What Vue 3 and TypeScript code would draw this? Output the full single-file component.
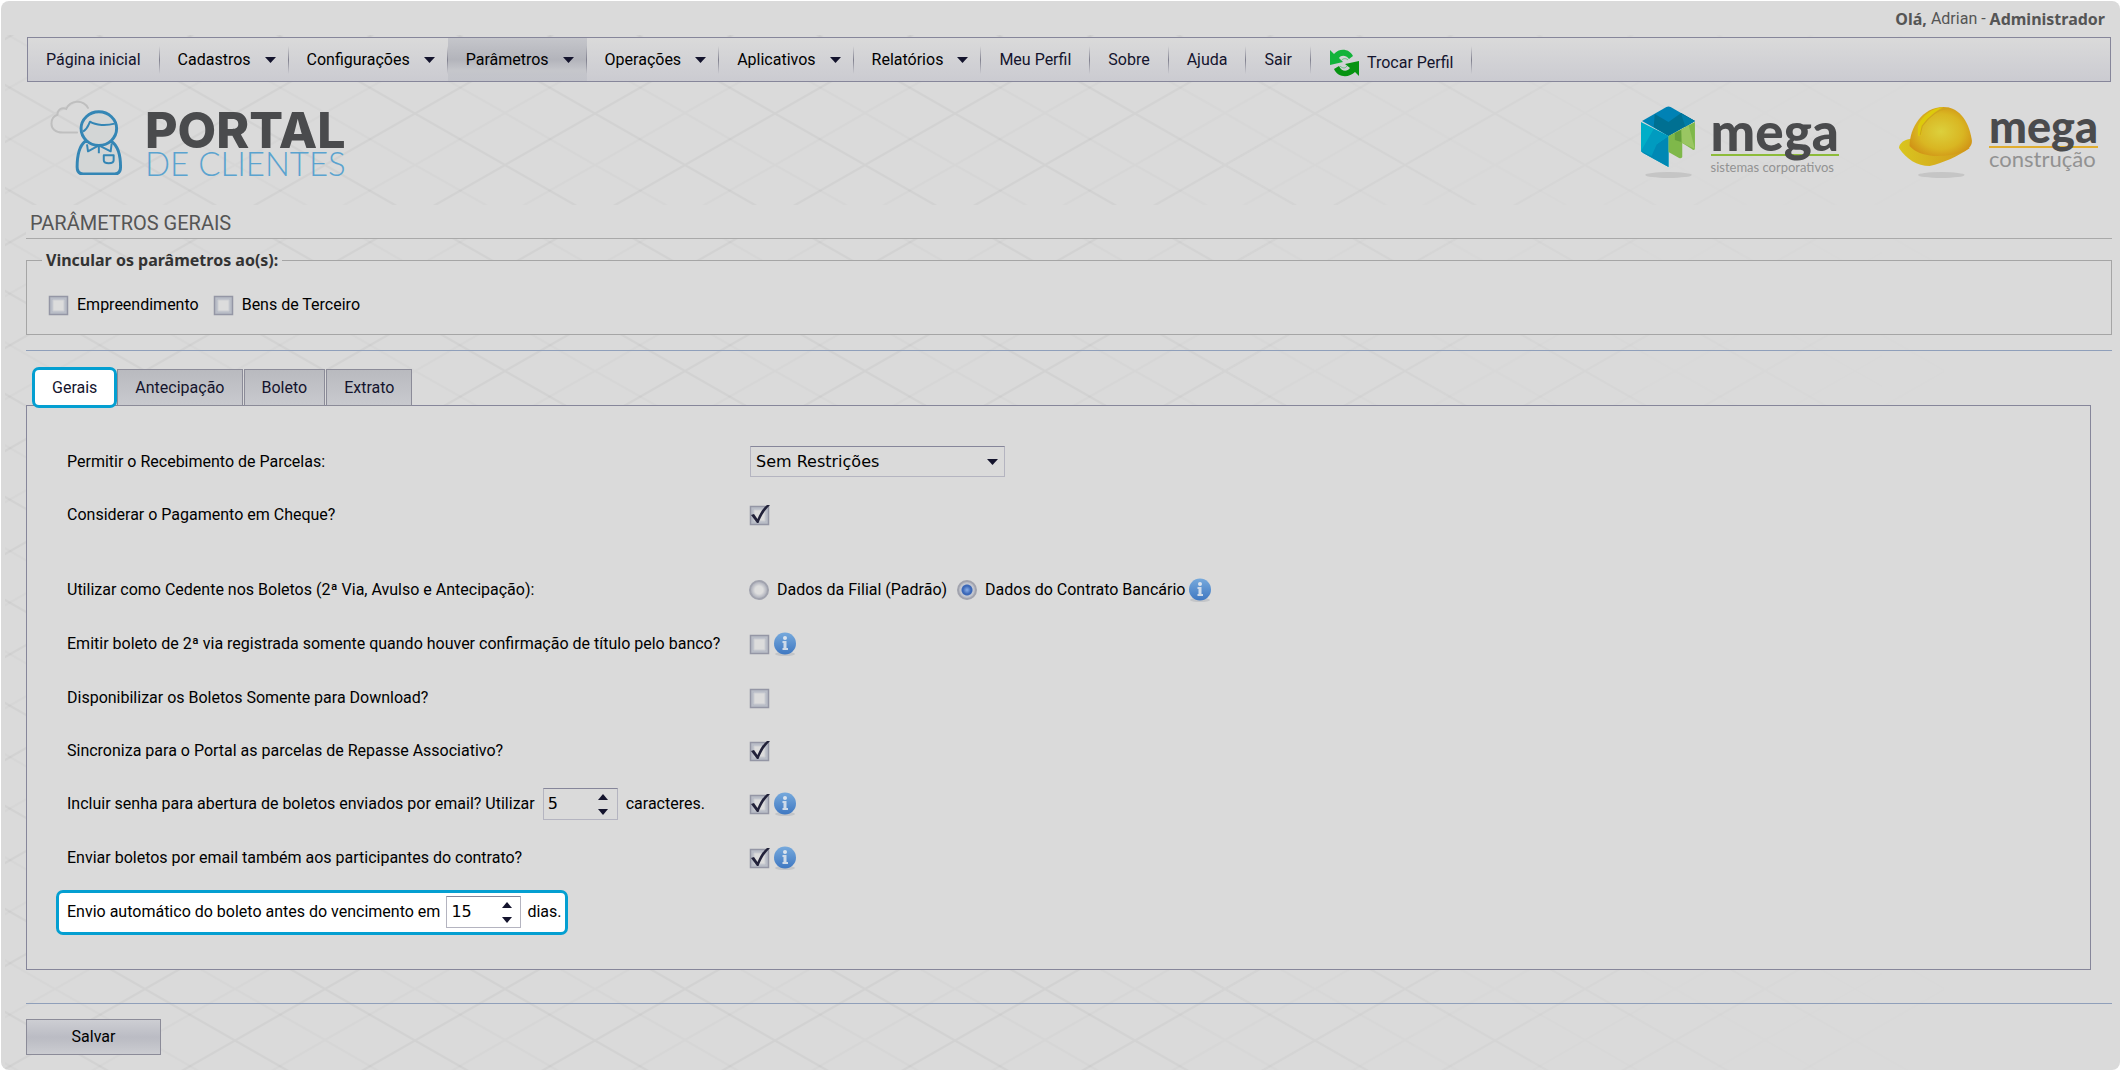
<script setup lang="ts">
import { ref } from 'vue'

interface MenuItem {
  label: string
  menu?: boolean
  active?: boolean
  swap?: boolean
}

interface Option {
  id: string
  label: string
  checked: boolean
  info?: boolean
  spin?: boolean
}

const menuItems: MenuItem[] = [
  { label: 'Página inicial' },
  { label: 'Cadastros', menu: true },
  { label: 'Configurações', menu: true },
  { label: 'Parâmetros', menu: true, active: true },
  { label: 'Operações', menu: true },
  { label: 'Aplicativos', menu: true },
  { label: 'Relatórios', menu: true },
  { label: 'Meu Perfil' },
  { label: 'Sobre' },
  { label: 'Ajuda' },
  { label: 'Sair' },
  { label: 'Trocar Perfil', swap: true },
]

const tabs = ['Gerais', 'Antecipação', 'Boleto', 'Extrato']
const currentTab = ref('Gerais')

const cheque = ref(true)
const cedente = ref('contrato')
const recebimento = ref('Sem Restrições')
const passwordLength = ref(5)
const daysBefore = ref(15)

const options = ref<Option[]>([
  { id: 'segunda-via', label: 'Emitir boleto de 2ª via registrada somente quando houver confirmação de título pelo banco?', checked: false, info: true },
  { id: 'download', label: 'Disponibilizar os Boletos Somente para Download?', checked: false },
  { id: 'repasse', label: 'Sincroniza para o Portal as parcelas de Repasse Associativo?', checked: true },
  { id: 'senha', label: 'Incluir senha para abertura de boletos enviados por email? Utilizar', checked: true, info: true, spin: true },
  { id: 'participantes', label: 'Enviar boletos por email também aos participantes do contrato?', checked: true, info: true },
])
</script>

<template>
  <div class="page">
    <svg class="lattice" aria-hidden="true">
      <defs>
        <pattern id="diamonds" x="140" y="27" width="180" height="103" patternUnits="userSpaceOnUse">
          <path d="M0 0L180 103M180 0L0 103" fill="none" stroke="#000" stroke-opacity=".034" stroke-width="2" />
          <path d="M90 0L180 51L90 103L0 51Z" fill="none" stroke="#000" stroke-opacity=".014" stroke-width="2" />
        </pattern>
      </defs>
      <rect width="100%" height="100%" fill="url(#diamonds)" />
    </svg>

    <header class="user"><b>Olá,</b>&nbsp;Adrian -&nbsp;<b>Administrador</b></header>

    <nav class="menubar">
      <template v-for="item in menuItems" :key="item.label">
        <button v-if="item.menu" type="button" class="item drop" :class="{ active: item.active }">
          {{ item.label }}
          <svg width="11" height="6" viewBox="0 0 11 6"><path d="M0 0H11L5.5 6Z" fill="#14142d" /></svg>
        </button>
        <a v-else href="#" class="item" :class="{ swap: item.swap }">
          <svg v-if="item.swap" width="30" height="28" viewBox="0 0 30 28">
            <path d="M1 1L5 5C10 -1 20 -1 24 7L20 10C17 6 12 6 10 9L14 13L1 16Z" fill="#12b33a" />
            <path d="M30 27L26 23C20 29 9 29 5 20L10 17C13 23 18 23 21 19L16 15L30 12Z" fill="#079312" />
            <path d="M12 12C14 9 17 9 19 11M18 17C16 20 13 19 11 17" fill="none" stroke="#5fc27c" stroke-width="1" />
          </svg>
          <span>{{ item.label }}</span>
        </a>
      </template>
    </nav>

    <div class="brands">
      <div class="brand portal">
        <svg width="74" height="77" viewBox="0 0 74 78">
          <path d="M27 35H12C5 35 1 31 1 26C1 21 4 18 7 17C7 12 11 9 16 11C20 2 33 1 38 10" fill="none" stroke="#bfbfbf" stroke-width="2" stroke-linecap="round" />
          <path d="M35 44C29 49 27 59 27 70C27 75 29 77 33 77H65C69 77 71 75 71 70C71 59 69 49 62 44Z" fill="#d3d6d6" stroke="#3486b5" stroke-width="3" />
          <ellipse cx="49" cy="31" rx="18" ry="17" fill="#d3d6d6" stroke="#3486b5" stroke-width="3" />
          <path d="M33 34C38 31 38 28 40 24C46 28 57 28 65 26M37 47L38 54L49 48L61 54L62 46M49 48V56M54 58H64V63C64 67 54 67 54 63Z" fill="none" stroke="#3486b5" stroke-width="2" stroke-linejoin="round" />
        </svg>
        <div class="wordmark">
          <strong>PORTAL</strong>
          <span>DE CLIENTES</span>
        </div>
      </div>

      <div class="brand sistemas">
        <svg width="55" height="74" viewBox="0 0 52 74" preserveAspectRatio="none">
          <ellipse cx="26" cy="69" rx="22" ry="3" fill="#c5c5c5" />
          <path d="M1 15L24 1Q26 0 28 1L51 15L26 30Z" fill="#0082b5" />
          <path d="M13 8L26 16L38 7L51 15L26 30L12 21Z" fill="#007092" />
          <path d="M38 8L51 15L42 21Z" fill="#007da8" />
          <path d="M0 16L26 30V61L2 47Q0 46 0 44Z" fill="#00aec8" />
          <path d="M0 45L15 38L26 30V61L2 47Z" fill="#0088b4" />
          <path d="M12 23L26 30L15 38L10 50L0 45Z" fill="#009bc0" />
          <path d="M26 30L51 16V43Q50 45 48 43L39 37V51Q38 53 36 52L26 46Z" fill="#7fb84a" />
          <path d="M38 24L45 19L51 43L39 37Z" fill="#9ac662" />
          <path d="M32 27L38 24V36L32 34Z" fill="#659f3c" />
        </svg>
        <div class="wordmark">
          <strong>mega</strong>
          <span>sistemas corporativos</span>
        </div>
      </div>

      <div class="brand construcao">
        <svg width="74" height="74" viewBox="0 0 70 74" preserveAspectRatio="none">
          <defs>
            <radialGradient id="shell" cx=".5" cy=".5" r=".6">
              <stop offset="0" stop-color="#dcd03c" />
              <stop offset=".6" stop-color="#d9b622" />
              <stop offset="1" stop-color="#cf8d14" />
            </radialGradient>
            <linearGradient id="brim" x1="0" x2="1">
              <stop offset="0" stop-color="#d9c51f" />
              <stop offset="1" stop-color="#d29b1c" />
            </linearGradient>
          </defs>
          <ellipse cx="40" cy="69" rx="22" ry="3" fill="#c5c5c5" />
          <path d="M10 33C4 34 0 38 0 42C7 53 17 60 29 60C42 57 56 50 67 42Z" fill="url(#brim)" />
          <path d="M10 40C10 22 22 1 42 1C59 1 67 19 69 35C69 47 50 50 33 50C23 49 15 46 10 40Z" fill="url(#shell)" />
          <path d="M18 20C22 9 32 2 42 1C33 6 26 13 22 20L21 29L18 30Z" fill="#ddca0b" />
          <path d="M20 29L22 20C28 11 35 4 47 2" fill="none" stroke="#cda51c" stroke-width="1" />
        </svg>
        <div class="wordmark">
          <strong>mega</strong>
          <span>construção</span>
        </div>
      </div>
    </div>

    <h1>PARÂMETROS GERAIS</h1>

    <fieldset class="bind">
      <legend>Vincular os parâmetros ao(s):</legend>
      <label><input type="checkbox" />Empreendimento</label>
      <label><input type="checkbox" />Bens de Terceiro</label>
    </fieldset>

    <hr />

    <div class="tabs" role="tablist">
      <button
        v-for="tab in tabs"
        :key="tab"
        type="button"
        role="tab"
        :aria-selected="tab === currentTab"
        :class="{ current: tab === currentTab }"
        @click="currentTab = tab"
      >{{ tab }}</button>
    </div>

    <form class="panel" @submit.prevent>
      <div class="row">
        <label class="caption" for="recebimento">Permitir o Recebimento de Parcelas:</label>
        <select id="recebimento" v-model="recebimento">
          <option>Sem Restrições</option>
        </select>
      </div>
      <div class="row spaced">
        <label class="caption" for="cheque">Considerar o Pagamento em Cheque?</label>
        <input id="cheque" v-model="cheque" type="checkbox" />
      </div>
      <div class="row tall">
        <span id="cedente" class="caption">Utilizar como Cedente nos Boletos (2ª Via, Avulso e Antecipação):</span>
        <div class="radios" role="radiogroup" aria-labelledby="cedente">
          <label><input v-model="cedente" type="radio" value="filial" />Dados da Filial (Padrão)</label>
          <label><input v-model="cedente" type="radio" value="contrato" />Dados do Contrato Bancário</label>
          <i class="info" aria-hidden="true"></i>
        </div>
      </div>
      <div v-for="option in options" :key="option.id" class="row" :class="{ tall: option.info }">
        <div class="caption">
          <label :for="option.id">{{ option.label }}</label>
          <template v-if="option.spin">
            <div class="spin">
              <input v-model="passwordLength" type="number" aria-label="Quantidade de caracteres" />
              <button type="button" aria-label="Aumentar" @click="passwordLength++"></button>
              <button type="button" aria-label="Diminuir" class="down" @click="passwordLength--"></button>
            </div>
            <span>caracteres.</span>
          </template>
        </div>
        <input :id="option.id" v-model="option.checked" type="checkbox" />
        <i v-if="option.info" class="info" aria-hidden="true"></i>
      </div>
      <div class="row tall">
        <div class="spotlight">
          <label for="dias">Envio automático do boleto antes do vencimento em</label>
          <div class="spin">
            <input id="dias" v-model="daysBefore" type="number" />
            <button type="button" aria-label="Aumentar" @click="daysBefore++"></button>
            <button type="button" aria-label="Diminuir" class="down" @click="daysBefore--"></button>
          </div>
          <span>dias.</span>
        </div>
      </div>
    </form>

    <hr class="end" />
    <button type="button" class="save">Salvar</button>
  </div>
</template>

<style>
body {
  background: #fff;
}
</style>

<style scoped>
* {
  box-sizing: border-box;
}

.page {
  position: relative;
  z-index: 0;
  margin: 1px;
  padding: 0 8px 15px 25px;
  background: #dadada;
  border-radius: 8px;
  color: #000;
  font: 16px/20px Roboto, "Liberation Sans", sans-serif;
  overflow: hidden;
}

button,
input,
select {
  margin: 0;
  font: inherit;
  color: inherit;
}

.lattice {
  position: absolute;
  z-index: -1;
  inset: 34px 0 0 4px;
  width: 100%;
  height: 100%;
  mask-image: linear-gradient(to right, #000 50%, transparent 94%);
}

.user {
  display: flex;
  justify-content: flex-end;
  height: 36px;
  padding: 8px 7px 0 0;
  color: #555;
}

.user b,
.bind legend {
  font-family: "Noto Sans", sans-serif;
}

.menubar {
  display: flex;
  height: 45px;
  margin: 0 1px;
  border: 1px solid #86869a;
  background: linear-gradient(#dadada, #cbcbd1);
}

.item {
  position: relative;
  display: flex;
  align-items: center;
  padding: 0 19px 0 18px;
  border: 0;
  background: none;
  color: #14142d;
  text-decoration: none;
  white-space: nowrap;
}

.item::after {
  content: "";
  align-self: center;
  position: absolute;
  right: 0;
  width: 1px;
  height: 28px;
  background: linear-gradient(transparent, #81818f, transparent);
}

.drop {
  gap: 14px;
  padding-right: 13px;
  color: #000;
}

.active {
  background: linear-gradient(#c5c6cb, #b3b4bb 50%, #c5c6cb 75%, #c2c3ca);
}

.swap {
  gap: 8px;
  padding-top: 6px;
}

.swap::after {
  top: 8px;
}

.brands {
  display: flex;
  align-items: flex-start;
  height: 123px;
  padding: 16px 14px 0 24px;
}

.brand {
  display: flex;
}

.wordmark {
  display: flex;
  flex-direction: column;
  color: #4a4b4d;
}

.portal {
  gap: 21px;
  margin-right: auto;
}

.portal strong {
  height: 49px;
  padding-top: 8px;
  font: 800 50px/48px Inter, sans-serif;
}

.portal span {
  color: #5aa3cf;
  font: 300 33px/32px Lato, sans-serif;
}

.sistemas {
  gap: 15px;
  margin: 8px 60px 0 0;
}

.sistemas strong {
  height: 50px;
  border-bottom: 2px solid #8dbb3a;
  font: 900 53px/50px Lato, sans-serif;
}

.sistemas span,
.construcao span {
  color: #929292;
  font: 13px/22px Lato, sans-serif;
}

.construcao {
  gap: 16px;
  margin-top: 8px;
}

.construcao strong {
  height: 42px;
  border-bottom: 2px solid #e0ad2f;
  font: 900 45px/40px Lato, sans-serif;
}

.construcao span {
  font-size: 22px;
}

h1 {
  height: 34px;
  margin: 0;
  padding: 4px 4px 0;
  border-bottom: 1px solid #a9a9a9;
  background: #dadada;
  color: #555;
  font: 20px/28px Roboto, sans-serif;
}

.bind {
  display: flex;
  height: 85px;
  margin: 11px 0 0;
  padding: 24px 21px 0;
  border: 1px solid #a5a5a5;
  background: #dadada;
}

.bind legend {
  margin-left: -6px;
  padding: 0 4px;
  color: #333;
  font-weight: 700;
}

.bind label {
  display: flex;
  align-items: center;
  gap: 7px;
  height: 22px;
  margin-right: 14px;
}

hr {
  height: 1px;
  margin: 15px 0 0;
  border: 0;
  background: #8f9fba;
}

.tabs {
  display: flex;
  align-items: flex-end;
  margin-top: 16px;
  padding-left: 6px;
}

.tabs button {
  height: 37px;
  margin: 0 1px -1px 0;
  padding: 0 17px;
  border: 1px solid #8b8b98;
  background: linear-gradient(#b9babf, #c8c9ce);
  color: #14142d;
}

.tabs .current {
  position: relative;
  height: 41px;
  margin: 0 0 -3px;
  border: 3px solid #049fd1;
  border-radius: 7px;
  background: #fff;
}

.panel {
  margin-right: 21px;
  padding: 29px 40px 30px;
  border: 1px solid #86869a;
  background: #dadada;
}

.row {
  display: flex;
  align-items: center;
  height: 53px;
}

.tall {
  height: 54px;
}

.spaced {
  margin-bottom: 22px;
}

.caption {
  display: flex;
  align-items: center;
  gap: 8px;
  width: 682px;
  white-space: nowrap;
}

select {
  appearance: none;
  width: 255px;
  height: 31px;
  margin-left: 1px;
  padding: 0 5px;
  border: 1px solid #b4b4c0;
  border-top-color: #86869a;
  border-radius: 0;
  background: url("data:image/svg+xml,%3Csvg xmlns='http://www.w3.org/2000/svg' width='11' height='6'%3E%3Cpath d='M0 0H11L5.5 6Z' fill='%2314142d'/%3E%3C/svg%3E") no-repeat right 6px center;
  font-family: "DejaVu Sans", sans-serif;
}

input[type="checkbox"] {
  appearance: none;
  width: 22px;
  height: 22px;
  background: url("data:image/svg+xml,%3Csvg xmlns='http://www.w3.org/2000/svg' width='22' height='22'%3E%3Cpath d='M1.500 2.500H19.500V20.500H1.500Z' fill='%23b9bdc7' stroke='%239496a5' stroke-width='1.500'/%3E%3Cpath d='M5 6H16V17H5Z' fill='%23dcdcdc' stroke='%23cbcdd2'/%3E%3C/svg%3E");
}

input[type="checkbox"]:checked {
  background-image: url("data:image/svg+xml,%3Csvg xmlns='http://www.w3.org/2000/svg' width='22' height='22'%3E%3Cpath d='M1.500 2.500H19.500V20.500H1.500Z' fill='%23b9bdc7' stroke='%239496a5' stroke-width='1.500'/%3E%3Cpath d='M5 6H16V17H5Z' fill='%23dcdcdc' stroke='%23cbcdd2'/%3E%3Cpath d='M2 11L5 10L8.500 15C11 9 14 4 18 1H21C16 6 12 12 9.500 19H8Z' fill='%2322223a'/%3E%3C/svg%3E");
}

input[type="radio"] {
  appearance: none;
  width: 20px;
  height: 20px;
  border: 2px solid #a1a3ae;
  border-radius: 50%;
  background: radial-gradient(#dedede 35%, #b7b9c2 65%);
}

input[type="radio"]:checked {
  background: radial-gradient(circle at 8px 8px, #8aaee8 0, #3c68b8 4px, #3c68b8 5px, #c6c9d2 6px, #b7b9c2 8px);
}

.radios,
.radios label {
  display: flex;
  align-items: center;
}

.radios label {
  gap: 8px;
  margin-right: 10px;
}

.radios .info {
  margin-left: -7px;
}

.info {
  width: 24px;
  height: 24px;
  margin-left: 2px;
  background: url("data:image/svg+xml,%3Csvg xmlns='http://www.w3.org/2000/svg' width='24' height='24'%3E%3Cdefs%3E%3ClinearGradient id='g' x2='0' y2='1'%3E%3Cstop stop-color='%2376a9dc'/%3E%3Cstop offset='1' stop-color='%233f78c2'/%3E%3C/linearGradient%3E%3C/defs%3E%3Cellipse cx='12' cy='22' rx='10' ry='2' fill='%23c3c5c8'/%3E%3Ccircle cx='12' cy='11.500' r='11' fill='url(%23g)'/%3E%3Ccircle cx='12' cy='6' r='2' fill='%23dce4ee'/%3E%3Cpath d='M9.500 9H13.500V16H15V18H9.500V16H10.500V11H9.500Z' fill='%23cfdbe9'/%3E%3C/svg%3E");
}

.spin {
  display: grid;
  grid-template-columns: 1fr 27px;
  grid-template-rows: 1fr 1fr;
  width: 75px;
  height: 32px;
  border: 1px solid #b4b4c0;
  border-top-color: #86869a;
}

.spin input {
  grid-row: span 2;
  width: 100%;
  min-width: 0;
  padding: 0 0 0 4px;
  border: 0;
  background: none;
  appearance: textfield;
  font-family: "DejaVu Sans", sans-serif;
}

.spin input::-webkit-inner-spin-button {
  display: none;
}

.spin button {
  padding: 0;
  border: 0;
  background: url("data:image/svg+xml,%3Csvg xmlns='http://www.w3.org/2000/svg' width='10' height='6'%3E%3Cpath d='M0 6L5 0L10 6Z' fill='%2314142d'/%3E%3C/svg%3E") no-repeat center;
}

.spin .down {
  background-image: url("data:image/svg+xml,%3Csvg xmlns='http://www.w3.org/2000/svg' width='10' height='6'%3E%3Cpath d='M0 0L5 6L10 0Z' fill='%2314142d'/%3E%3C/svg%3E");
}

.spotlight {
  display: flex;
  align-items: center;
  gap: 6px;
  height: 45px;
  margin-left: -11px;
  padding: 0 4px 0 8px;
  border: 3px solid #049fd1;
  border-radius: 7px;
  background: #fff;
  white-space: nowrap;
}

.end {
  margin-top: 33px;
}

.save {
  display: block;
  width: 135px;
  height: 36px;
  margin-top: 15px;
  border: 1px solid #8b8b98;
  background: linear-gradient(#cdced3, #bbbcc4 50%, #bdbec5 60%, #cbccd1);
}
</style>
